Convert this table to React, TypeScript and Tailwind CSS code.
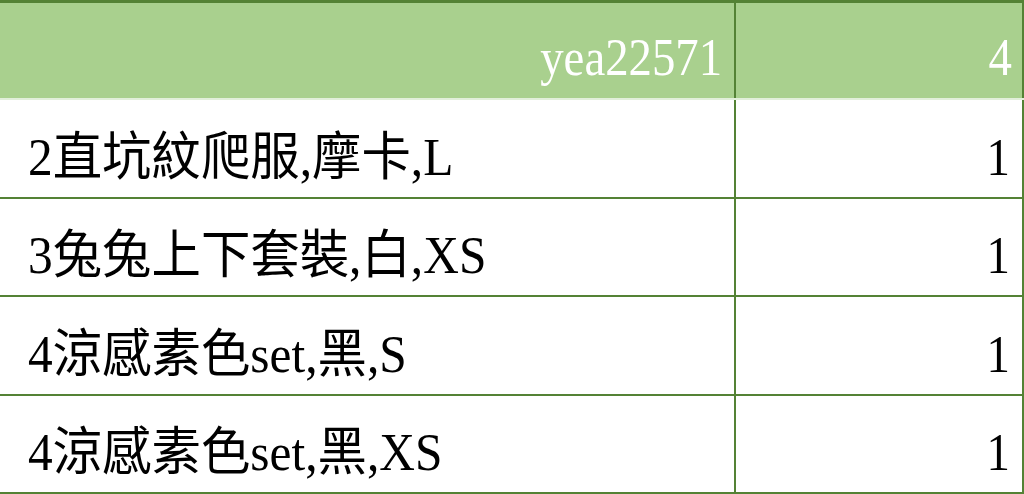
import React from "react";

const rows = [
  { name: "2直坑紋爬服,摩卡,L", qty: "1" },
  { name: "3兔兔上下套裝,白,XS", qty: "1" },
  { name: "4涼感素色set,黑,S", qty: "1" },
  { name: "4涼感素色set,黑,XS", qty: "1" },
];

const font = { fontFamily: '"Liberation Serif", "Noto Sans CJK TC", serif' };

export default function App() {
  return (
    <div className="w-[1024px] h-[494px] overflow-hidden bg-white" style={font}>
      <div className="grid grid-cols-[736px_1fr] h-[100px] bg-[#a9d08e] border-t-[3px] border-[#548235] border-b-2 border-b-[#e2efda] box-border">
        <div className="flex items-end justify-end pr-[12px] pb-[14px] border-r-[2px] border-r-[#548235] text-white text-[52px] leading-[52px]">
          <span className="inline-block scale-x-90 origin-right">yea22571</span>
        </div>
        <div className="flex items-end justify-end pr-[10px] pb-[14px] border-r-[2px] border-r-[#548235] text-white text-[52px] leading-[52px]">
          <span className="inline-block scale-x-90 origin-right">4</span>
        </div>
      </div>
      {rows.map((r, i) => (
        <div
          key={i}
          className="grid grid-cols-[736px_1fr] h-[98.5px] border-b-[2.5px] border-b-[#548235] box-border"
        >
          <div className="flex items-end justify-start pl-[28px] pb-[13px] border-r-[2px] border-r-[#548235] text-black text-[52px] leading-[52px] whitespace-nowrap">
            <span className="inline-block scale-x-95 origin-left">{r.name}</span>
          </div>
          <div className="flex items-end justify-end pr-[12px] pb-[13px] border-r-[2px] border-r-[#548235] text-black text-[52px] leading-[52px]">
            <span className="inline-block scale-x-90 origin-right">{r.qty}</span>
          </div>
        </div>
      ))}
    </div>
  );
}
